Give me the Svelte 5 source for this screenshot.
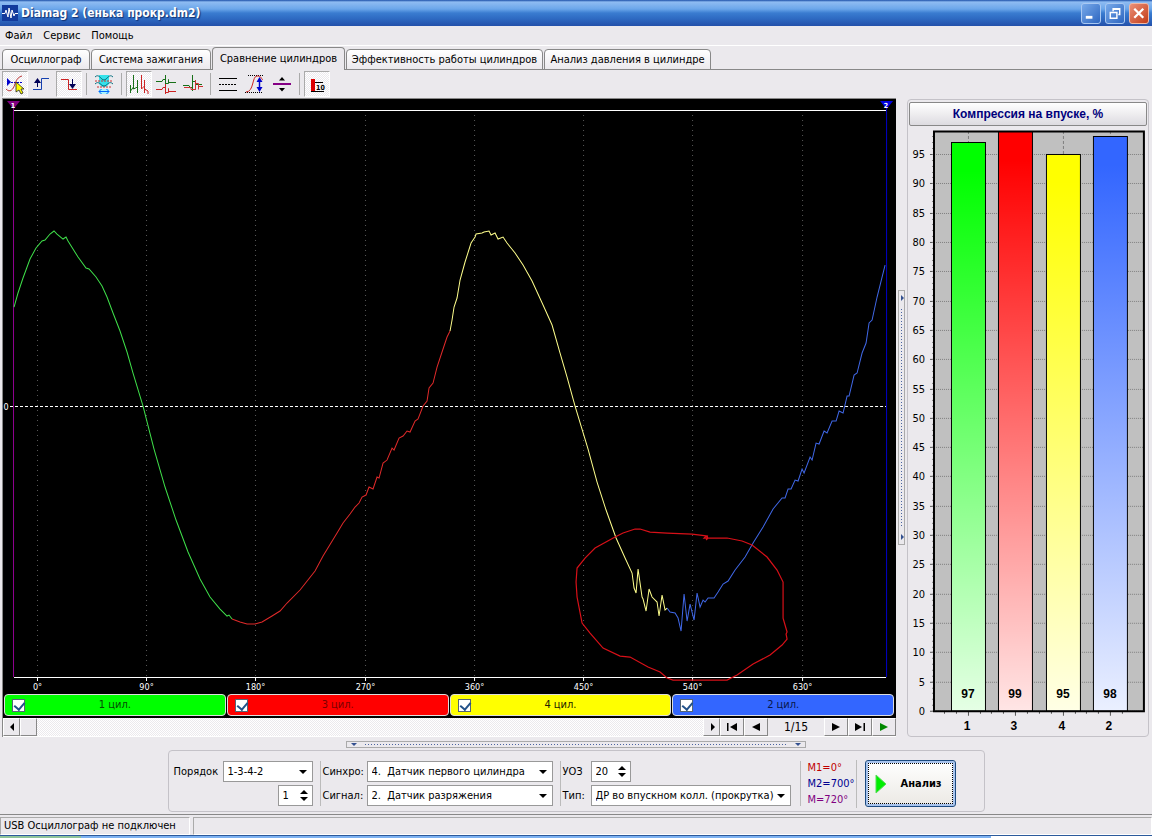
<script lang="ts">
	const tabs = [
		{ label: 'Осциллограф', width: 88 },
		{ label: 'Система зажигания', width: 120 },
		{ label: 'Сравнение цилиндров', width: 133 },
		{ label: 'Эффективность работы цилиндров', width: 197 },
		{ label: 'Анализ давления в цилиндре', width: 167 }
	];
	let activeTab = 2;

	const degrees = [0, 90, 180, 270, 360, 450, 540, 630];
	const degreeX = (deg: number) => Math.round(37 + deg * 1.2135) + 0.5;

	const cylinders = [
		{ id: 1, color: '#00ff00', text: '#064a06', value: 97, shown: true },
		{ id: 3, color: '#ff0000', text: '#7c0000', value: 99, shown: true },
		{ id: 4, color: '#ffff00', text: '#222200', value: 95, shown: true },
		{ id: 2, color: '#3366ff', text: '#08184a', value: 98, shown: true }
	];

	// Sampled pressure curve, one part per cylinder
	const curves = [
		{
			color: '#3fe04a',
			points:
				'14,307 18,293 23,278 30,259 36,248 42,241 45,240 50,234 54,231 57,234 63,239 66,237 68,241 78,257 86,268 89,269 96,277 102,286 107,297 113,313 120,331 127,352 133,373 143,406 154,449 165,487 176,520 188,552 200,579 210,597 220,609 227,616 229,615 232,619'
		},
		{
			color: '#e02a2a',
			points:
				'232,619 240,622 247,624 255,624 262,622 272,616 280,611 287,603 300,590 315,571 323,556 337,533 343,523 350,514 355,507 359,503 362,497 366,495 369,487 373,489 377,477 379,478 383,463 387,460 392,448 394,450 399,438 403,436 407,431 410,432 415,421 418,419 423,406 427,401 429,388 433,383 437,367 442,352 445,343 447,337 450,331'
		},
		{
			color: '#ffff8c',
			points:
				'450,331 452,320 454,307 457,298 460,280 465,262 471,243 475,237 476,234 482,233 484,232 489,231 491,235 495,233 498,239 503,237 507,243 515,253 523,265 532,281 543,305 552,325 560,353 567,377 575,406 588,449 597,482 606,510 616,538 625,558 632,573 634,588 636,593 638,569 642,597 643,599 646,611 649,589 652,597 657,602 659,616 662,595 665,610 667,608'
		},
		{
			color: '#4068e8',
			points:
				'667,608 670,612 675,613 678,618 681,631 684,594 687,621 690,604 694,620 697,593 700,607 703,600 705,602 708,598 714,598 718,592 723,584 728,581 735,570 745,557 753,543 763,527 773,509 782,498 785,498 788,489 791,489 795,480 798,481 802,469 804,473 810,457 812,460 816,443 819,444 824,431 827,433 832,421 836,421 839,411 843,413 847,396 849,396 854,375 857,373 862,353 866,343 869,323 872,320 877,297 885,265'
		}
	];

	const marker =
		'708,536 692,534 667,533 650,532 640,529 635,529 623,533 615,537 595,548 585,558 577,568 576,582 577,597 582,623 590,633 603,648 620,656 630,657 648,667 660,672 667,678 673,680 727,680 737,675 753,664 770,655 782,645 787,639 786,634 787,632 783,618 783,582 777,570 767,557 752,545 742,541 727,538 704,538 706,536 708,538 706,540';

	// Compression chart
	const base = 711;
	const top = 131;
	const unit = 5.863;
	const levels = Array.from({ length: 20 }, (_, i) => i * 5);
	const minor = Array.from({ length: 99 }, (_, i) => i);
	const valueY = (v: number) => Math.round(base - v * unit);
	const barX = (i: number) => Math.round(951 + i * 47.4);
</script>

<div class="app">
	<header class="titlebar">
		<svg class="logo" width="16" height="16" viewBox="0 0 16 16">
			<rect width="16" height="16" fill="#123a9c" />
			<path d="M0 8.500H3L4 5L6 12L7 3L9 13L10 5L12 11L13 8.500H16" fill="none" stroke="#fff" />
		</svg>
		<h1>Diamag 2 (енька прокр.dm2)</h1>
		<div class="window-buttons">
			<button aria-label="Свернуть"><svg viewBox="0 0 19 19"><path d="M4 13.500H11" stroke="#fff" stroke-width="3" /></svg></button>
			<button aria-label="Восстановить"><svg viewBox="0 0 19 19"><path d="M4.500 8.500H11.500V14.500H4.500ZM4 8.500H12M7.500 7V4.500H14.500V10.500H13M7 5H15" fill="none" stroke="#fff" stroke-width="1.500" /></svg></button>
			<button class="close" aria-label="Закрыть"><svg viewBox="0 0 19 19"><path d="M4.500 4.500L14 14M14 4.500L4.500 14" stroke="#fff" stroke-width="2.400" /></svg></button>
		</div>
	</header>

	<nav class="menu">
		<button>Файл</button>
		<button>Сервис</button>
		<button>Помощь</button>
	</nav>

	<div class="tabs" role="tablist">
		{#each tabs as tab, i}
			<button
				role="tab"
				class="tab"
				class:active={i === activeTab}
				aria-selected={i === activeTab}
				style="flex-basis: {tab.width}px"
				on:click={() => (activeTab = i)}>{tab.label}</button>
		{/each}
	</div>

	<div class="toolbar">
		<button class="tool pressed" aria-label="Выбор">
			<svg viewBox="0 0 26 26">
				<path d="M5 7L9 11L5 15Z" fill="#00c" />
				<path d="M9 11.500H20" stroke="#00c" stroke-dasharray="2 1" />
				<path d="M4 18C8 22 11 19 13 13S17 6 20 5" fill="none" stroke="#b33" />
				<path d="M14 11L14 21L17 19L19 23L21 22L19 18H22Z" fill="#ff0" stroke="#222" stroke-width=".8" />
			</svg>
		</button>
		<button class="tool" aria-label="Передний фронт">
			<svg viewBox="0 0 26 26">
				<path d="M4 18.500H12.500V7.500H20" fill="none" stroke="#1540b0" />
				<path d="M8.500 16V9" stroke="#005" />
				<path d="M5 12L8.500 7L12 12Z" fill="#005" />
			</svg>
		</button>
		<button class="tool pressed" aria-label="Задний фронт">
			<svg viewBox="0 0 26 26">
				<path d="M5 8.500H12.500V18.500H21" fill="none" stroke="#c22" />
				<path d="M16.500 8V16" stroke="#005" />
				<path d="M13 13L16.500 18L20 13Z" fill="#005" />
			</svg>
		</button>
		<i class="sep"></i>
		<button class="tool" aria-label="Ширина">
			<svg viewBox="0 0 26 26">
				<path d="M8 4H18V13L15 16H11L8 13Z" fill="#35e2ea" />
				<path d="M8 18H18V23H8Z" fill="#a8f4fa" />
				<path d="M4 6C8 2 10 9 13 9S18 2 22 6M4 13C8 9 10 15 13 15S18 9 22 13" fill="none" stroke="#087080" />
				<path d="M4 10H22M6 16H20" stroke="#c33" stroke-dasharray="2 1" />
				<path d="M8 20.500H18M10.500 18L8 20.500L10.500 23M15.500 18L18 20.500L15.500 23" fill="none" stroke="#06f" />
			</svg>
		</button>
		<i class="sep"></i>
		<button class="tool pressed" aria-label="Последовательно">
			<svg viewBox="0 0 26 26">
				<path d="M4.500 22V14M4.500 20L7.500 16V4V18L11.500 16V9M11.500 22V14" fill="none" stroke="#187018" />
				<path d="M15.500 4V18L18.500 15V22M18.500 9V18L22 20V23" fill="none" stroke="#c22" />
			</svg>
		</button>
		<button class="tool" aria-label="Одна под другой">
			<svg viewBox="0 0 26 26">
				<path d="M3 10.500H9L10 8.500H12.500V4V13.500M12.500 12.500H15.500V8.500V11.500H23" fill="none" stroke="#187018" />
				<path d="M3 18.500H9L10 16.500H12.500V13V23M12.500 21.500H15.500V17.500V20.500H23" fill="none" stroke="#c22" />
			</svg>
		</button>
		<button class="tool" aria-label="Наложение">
			<svg viewBox="0 0 26 26">
				<path d="M3 14.500H9L10 16.500H12.500V4V20M12.500 10.500H15.500V13.500H22" fill="none" stroke="#187018" />
				<path d="M4 16.500H11V18.500H15.500V9V19M15.500 12.500H18.500V18.500M18.500 15.500H23" fill="none" stroke="#c33" />
			</svg>
		</button>
		<i class="sep"></i>
		<button class="tool" aria-label="Линии">
			<svg viewBox="0 0 26 26">
				<path d="M4 7.500H22M4 19.500H22" stroke="#000" />
				<path d="M4 13.500H22" stroke="#000" stroke-dasharray="2 1" />
			</svg>
		</button>
		<button class="tool" aria-label="Амплитуда">
			<svg viewBox="0 0 26 26">
				<path d="M6 4.500H22M3 21.500H20" stroke="#000" stroke-dasharray="1 1" />
				<path d="M4 21C12 21 10 5 15 5S19 8 21 9" fill="none" stroke="#c22" />
				<path d="M17.500 9V18" stroke="#00c" stroke-width="1.500" />
				<path d="M14.500 11L17.500 6L20.500 11ZM14.500 16L17.500 21L20.500 16Z" fill="#00c" />
			</svg>
		</button>
		<button class="tool" aria-label="Сдвиг">
			<svg viewBox="0 0 26 26">
				<path d="M4 13H22" stroke="#850085" stroke-width="2" />
				<path d="M10 9.500L13 6L16 9.500ZM10 17L13 20.500L16 17Z" fill="#000" />
			</svg>
		</button>
		<i class="sep"></i>
		<button class="tool pressed" aria-label="Диаграмма">
			<svg viewBox="0 0 26 26">
				<rect x="7" y="8" width="4" height="12" fill="#d00" />
				<path d="M7 20.500H20M11 11.500H19" stroke="#000" />
				<text x="12" y="19" font-size="7" font-weight="bold">10</text>
			</svg>
		</button>
	</div>

	<main>
		<section class="scope">
			<svg class="wave" viewBox="3 99 893 594">
				<rect x="3" y="99" width="893" height="594" fill="#000" />
				{#each degrees as deg}
					<line x1={degreeX(deg)} y1="115" x2={degreeX(deg)} y2="677" stroke="#585858" stroke-dasharray="1 4" />
					<line x1={degreeX(deg)} y1="678" x2={degreeX(deg)} y2="681" stroke="#fff" />
					<text class="axis" x={degreeX(deg)} y="690">{deg}°</text>
				{/each}
				<line x1="14" y1="110.500" x2="886" y2="110.500" stroke="#fff" />
				<line x1="14" y1="677.500" x2="886" y2="677.500" stroke="#fff" />
				<line x1="10" y1="406.500" x2="886" y2="406.500" stroke="#fff" stroke-dasharray="3 2" />
				<text class="axis" x="6" y="410">0</text>
				<line x1="13.500" y1="102" x2="13.500" y2="677" stroke="#900090" />
				<line x1="886.500" y1="102" x2="886.500" y2="677" stroke="#0000c8" />
				<path d="M7 101H20L13.500 109Z" fill="#800080" />
				<path d="M880 101H893L886.500 109Z" fill="#0000e0" />
				<text class="flag" x="13" y="108">1</text>
				<text class="flag" x="886" y="108">2</text>
				{#each curves as curve}
					<polyline points={curve.points} fill="none" stroke={curve.color} />
				{/each}
				<polyline points={marker} fill="none" stroke="#d81018" stroke-width="1.200" />
			</svg>

			<div class="cylinders">
				{#each cylinders as cyl}
					<label class="cylinder" style="background: {cyl.color}; color: {cyl.text}">
						<input type="checkbox" bind:checked={cyl.shown} />
						<span>{cyl.id} цил.</span>
					</label>
				{/each}
			</div>

			<div class="scroll">
				<button class="step" aria-label="Влево"><svg viewBox="0 0 12 12"><path d="M8 2V10L4 6Z" /></svg></button>
				<div class="track"><button class="step" aria-label="Ползунок"></button></div>
				<button class="step" aria-label="Вправо"><svg viewBox="0 0 12 12"><path d="M5 2V10L9 6Z" /></svg></button>
				<button class="nav" aria-label="Первый"><svg viewBox="0 0 12 12"><path d="M1 2H2.500V10H1ZM11 2V10L4 6Z" /></svg></button>
				<button class="nav" aria-label="Назад"><svg viewBox="0 0 12 12"><path d="M10 2V10L2 6Z" /></svg></button>
				<output>1/15</output>
				<button class="nav" aria-label="Вперёд"><svg viewBox="0 0 12 12"><path d="M2 2V10L10 6Z" /></svg></button>
				<button class="nav" aria-label="Последний"><svg viewBox="0 0 12 12"><path d="M1 2V10L8 6ZM9.500 2H11V10H9.500Z" /></svg></button>
				<button class="nav play" aria-label="Пуск"><svg viewBox="0 0 12 12"><path d="M2 2V10L10 6Z" /></svg></button>
			</div>
		</section>

		<div class="splitter vertical"><div class="grip"><b></b><i></i><b></b></div></div>

		<section class="compression">
			<button class="heading">Компрессия на впуске, %</button>
			<svg class="bars" viewBox="909 127 238 609">
				<defs>
					{#each cylinders as cyl}
						<linearGradient id="fill-{cyl.id}" x1="0" y1="0" x2="0" y2="1">
							<stop offset="0" stop-color={cyl.color} />
							<stop offset=".05" stop-color={cyl.color} />
							<stop offset="1" stop-color={cyl.color} stop-opacity=".1" />
						</linearGradient>
					{/each}
				</defs>
				<rect x="934" y={top} width="210" height={base - top} fill="#c0c0c0" />
				{#each levels as v}
					<line x1="934" y1={valueY(v) + 0.5} x2="1144" y2={valueY(v) + 0.5} stroke="#808080" stroke-dasharray="1 1" />
					<line x1="930" y1={valueY(v) + 0.5} x2="934" y2={valueY(v) + 0.5} stroke="#555" />
					<text class="level" x="925" y={valueY(v) + 4}>{v}</text>
				{/each}
				{#each minor as v}
					<line x1="932" y1={valueY(v) + 0.5} x2="934" y2={valueY(v) + 0.5} stroke="#888" />
				{/each}
				{#each cylinders as cyl, i}
					{@const y = Math.max(valueY(cyl.value), top)}
					<line x1={barX(i) + 17.5} y1={top} x2={barX(i) + 17.5} y2={base} stroke="#808080" stroke-dasharray="3 2" />
					<rect x={barX(i)} {y} width="35" height={base - y} fill="#fff" />
					<rect x={barX(i) + 0.5} y={y + 0.5} width="34" height={base - y} fill="url(#fill-{cyl.id})" stroke="#000" />
					<text class="value" x={barX(i) + 17} y="698">{cyl.value}</text>
					<text class="value" x={barX(i) + 16} y="730">{cyl.id}</text>
					{#each [-24, -12, 0, 12] as dx}
						<line x1={barX(i) + 17.5 + dx} y1="712" x2={barX(i) + 17.5 + dx} y2={dx ? 714 : 716} stroke="#555" />
					{/each}
				{/each}
				<path d="M934 711V131.500H1144V711" fill="none" stroke="#000" stroke-width="2" />
				<path d="M933 711.500H1145" stroke="#000" stroke-width="2" />
			</svg>
		</section>
	</main>

	<div class="splitter horizontal"><div class="grip"><b></b><i></i><b></b></div></div>

	<form class="settings" on:submit|preventDefault>
		<div class="box">
			<div class="fields order">
				<label for="order">Порядок</label>
				<div class="select"><select id="order"><option>1-3-4-2</option></select></div>
				<div class="spin first">
					<input aria-label="Номер цилиндра" value="1" />
					<span><button type="button" aria-label="Больше"></button><button type="button" class="down" aria-label="Меньше"></button></span>
				</div>
			</div>
			<div class="fields sensors">
				<label for="sync">Синхро:</label>
				<div class="select"><select id="sync"><option>4.&nbsp; Датчик первого цилиндра</option></select></div>
				<label for="signal">Сигнал:</label>
				<div class="select"><select id="signal"><option>2.&nbsp; Датчик разряжения</option></select></div>
			</div>
			<div class="fields kind">
				<label for="angle">УОЗ</label>
				<div class="spin">
					<input id="angle" value="20" />
					<span><button type="button" aria-label="Больше"></button><button type="button" class="down" aria-label="Меньше"></button></span>
				</div>
				<label for="type">Тип:</label>
				<div class="select"><select id="type"><option>ДР во впускном колл. (прокрутка)</option></select></div>
			</div>
			<div class="marks">
				<span class="m1">M1=0°</span>
				<span class="m2">M2=700°</span>
				<span class="m">M=720°</span>
			</div>
			<button class="analyze">
				<svg width="12" height="20" viewBox="0 0 12 20"><path d="M1 1L11 10L1 19Z" fill="#0e0" stroke="#5d5" /></svg>
				Анализ
			</button>
		</div>
	</form>

	<footer>
		<span class="status">USB Осциллограф не подключен</span>
		<span class="rest"></span>
	</footer>
	<div class="taskbar"></div>
</div>

<style>
	:global(body) {
		margin: 0;
		background: #ebe9ed;
	}

	* {
		box-sizing: border-box;
	}

	.app {
		display: flex;
		flex-direction: column;
		font-family: 'DejaVu Sans Condensed', 'DejaVu Sans', sans-serif;
		font-size: 11px;
		line-height: 14px;
		color: #000;
		background: #ebe9ed;
	}

	button,
	input,
	select {
		font: inherit;
		color: inherit;
		margin: 0;
		padding: 0;
	}

	button {
		border: 0;
		background: none;
		white-space: nowrap;
	}

	/* Title bar */
	.titlebar {
		display: flex;
		align-items: center;
		height: 26px;
		padding: 0 3px 0 2px;
		background: linear-gradient(#1c4fa8 0, #8fbcf2 2px, #6ba6ea 9px, #3a7cd0 13px, #2f6cc4 18px, #2350aa 26px);
	}

	h1 {
		flex: 1;
		margin: 0 0 0 3px;
		font-size: 12px;
		line-height: 16px;
		font-weight: bold;
		color: #fff;
		text-shadow: 1px 1px 1px #123070;
	}

	.window-buttons {
		display: flex;
		gap: 4px;
	}

	.window-buttons button {
		width: 20px;
		height: 21px;
		border: 1px solid #a9c8f2;
		border-radius: 3px;
		background: linear-gradient(135deg, #77a9ea, #2d66c0);
	}

	.window-buttons .close {
		border-color: #f0b8a4;
		background: linear-gradient(135deg, #eb9078, #c23c18);
	}

	.window-buttons svg {
		display: block;
		width: 18px;
		height: 19px;
	}

	/* Menu and tabs */
	.menu {
		display: flex;
		gap: 11px;
		height: 20px;
		padding: 1px 5px 0;
		border-bottom: 1px solid #fff;
	}

	.tabs {
		display: flex;
		align-items: flex-end;
		gap: 1px;
		height: 24px;
		padding-left: 2px;
		box-shadow: inset 0 -1px #888;
	}

	.tab {
		flex: 0 0 auto;
		height: 21px;
		border: 1px solid #888;
		border-radius: 4px 4px 0 0;
		background: linear-gradient(#fff, #ebe9ed);
	}

	.tab.active {
		height: 23px;
		padding-bottom: 1px;
		border-bottom: 0;
		background: #ebe9ed;
	}

	/* Toolbar */
	.toolbar {
		display: flex;
		align-items: center;
		gap: 1px;
		height: 28px;
		padding-left: 2px;
	}

	.tool {
		width: 26px;
		height: 26px;
	}

	.tool svg {
		display: block;
		width: 26px;
		height: 26px;
		margin: -1px;
	}

	.tool:not(.pressed) svg {
		margin: 0;
	}

	.pressed {
		border: 1px solid #fff;
		border-top-color: #aaa;
		border-left-color: #aaa;
		background: repeating-conic-gradient(#fff 0 25%, #ebe9ed 0 50%) 0 0 / 2px 2px;
	}

	.sep {
		width: 1px;
		height: 22px;
		margin: 0 3px;
		background: #aaa;
	}

	/* Oscilloscope */
	main {
		display: flex;
	}

	.scope {
		flex: 1;
		min-width: 0;
		margin-left: 2px;
		border-top: 1px solid #888;
		border-left: 1px solid #888;
	}

	.wave,
	.bars {
		display: block;
		width: 100%;
	}

	.axis {
		fill: #fff;
		font-size: 9px;
		text-anchor: middle;
	}

	.flag {
		fill: #fff;
		font-size: 7px;
		font-weight: bold;
		text-anchor: middle;
	}

	.cylinders {
		display: flex;
		gap: 1px;
		padding: 1px 2px 2px 1px;
		background: #000;
	}

	.cylinder {
		display: grid;
		grid-template-columns: 1fr auto 1fr;
		align-items: center;
		flex: 1;
		height: 22px;
		padding: 0 7px;
		border: 1px solid #ddd;
		border-radius: 4px;
	}

	.cylinder input {
		appearance: none;
		width: 13px;
		height: 13px;
		border: 1px solid #567;
		background: #fff;
	}

	.cylinder input:checked::after {
		content: '';
		display: block;
		width: 5px;
		height: 8px;
		margin: 0 0 0 3px;
		border: solid #23528a;
		border-width: 0 2px 2px 0;
		transform: rotate(40deg);
	}

	.scroll {
		display: flex;
		height: 19px;
		border-bottom: 1px solid #fff;
	}

	.step,
	.nav {
		display: flex;
		align-items: center;
		justify-content: center;
		width: 17px;
		border: 1px solid #fff;
		border-right-color: #888;
		border-bottom-color: #888;
		background: #ebe9ed;
	}

	.nav {
		width: 24px;
	}

	.step svg,
	.nav svg {
		flex: none;
		width: 12px;
		height: 12px;
	}

	.play {
		fill: #080;
	}

	.track {
		display: flex;
		flex: 1;
		background: repeating-conic-gradient(#fff 0 25%, #ebe9ed 0 50%) 0 0 / 2px 2px;
	}

	output {
		width: 56px;
		font-size: 12px;
		line-height: 18px;
		text-align: center;
	}

	/* Splitters */
	.splitter {
		display: flex;
		align-items: center;
		justify-content: center;
	}

	.vertical {
		width: 11px;
	}

	.horizontal {
		height: 13px;
		padding-top: 2px;
	}

	.grip {
		display: flex;
		align-items: center;
		border: 1px solid #aaa;
	}

	.vertical .grip {
		flex-direction: column;
		width: 7px;
		height: 40%;
	}

	.horizontal .grip {
		width: 40%;
		height: 7px;
	}

	.grip i {
		flex: 1;
	}

	.vertical i {
		width: 1px;
		margin: 4px 0;
		background: repeating-linear-gradient(#4a64a0 0 1px, transparent 1px 3px);
	}

	.horizontal i {
		height: 1px;
		margin: 0 4px;
		background: repeating-linear-gradient(90deg, #4a64a0 0 1px, transparent 1px 3px);
	}

	.grip b {
		width: 0;
		height: 0;
		border: 3px solid transparent;
	}

	.vertical b {
		margin: 4px -2px 4px 2px;
		border-left-color: #33508f;
	}

	.horizontal b {
		margin: 3px 4px 0;
		border-top-color: #33508f;
	}

	/* Compression chart */
	.compression {
		flex: 0 0 21%;
		min-width: 0;
		margin: 1px 3px 0 0;
		padding: 2px 1px 0;
		border: 1px solid #c4c2c8;
		border-radius: 4px;
	}

	.heading {
		display: block;
		width: 100%;
		height: 24px;
		margin-bottom: 1px;
		border: 1px solid #888;
		border-radius: 2px;
		font-family: 'Liberation Sans', Arial, sans-serif;
		font-size: 12px;
		font-weight: bold;
		color: #00007c;
		background: linear-gradient(#fff, #dddbe0);
	}

	.level {
		font-size: 11px;
		text-anchor: end;
	}

	.value {
		font-family: 'Liberation Sans', Arial, sans-serif;
		font-size: 12px;
		font-weight: bold;
		text-anchor: middle;
	}

	/* Settings */
	.settings {
		display: flex;
		justify-content: center;
		padding-bottom: 2px;
		border-bottom: 1px solid #888;
	}

	.box {
		display: flex;
		align-items: center;
		height: 62px;
		padding: 5px 28px 0 5px;
		border: 1px solid #c4c2c8;
		border-radius: 4px;
	}

	.fields {
		display: grid;
		grid-auto-rows: 21px;
		row-gap: 3px;
		align-items: center;
		padding-right: 7px;
		margin-right: 2px;
		border-right: 1px solid #bbb;
	}

	.order {
		grid-template-columns: 49px 90px;
	}

	.sensors {
		grid-template-columns: 44px 186px;
	}

	.kind {
		grid-template-columns: 28px 200px;
		padding-right: 9px;
		margin-right: 7px;
	}

	.select {
		position: relative;
	}

	.select::after {
		content: '';
		position: absolute;
		top: 9px;
		right: 6px;
		border: 4px solid transparent;
		border-top-color: #000;
		pointer-events: none;
	}

	select {
		appearance: none;
		display: block;
		width: 100%;
		height: 21px;
		padding: 0 15px 0 4px;
		border: 1px solid #999;
		border-radius: 0;
		background: #fff;
	}

	.spin {
		display: flex;
		align-items: center;
		justify-self: start;
		width: 40px;
		height: 21px;
		padding: 0 4px;
		border: 1px solid #999;
		background: #fff;
	}

	.first {
		grid-column: 2;
		justify-self: end;
		width: 35px;
	}

	.spin input {
		width: 100%;
		min-width: 0;
		border: 0;
		outline: 0;
		background: none;
	}

	.spin span {
		display: flex;
		flex-direction: column;
		gap: 3px;
	}

	.spin button {
		border: 4px solid transparent;
		border-top-width: 0;
		border-bottom-color: #000;
	}

	.spin .down {
		border-width: 4px 4px 0;
		border-top-color: #000;
	}

	.marks {
		display: flex;
		flex-direction: column;
		width: 49px;
		margin-right: 8px;
		border-right: 1px solid #bbb;
		line-height: 16px;
	}

	.m1 {
		color: #c00000;
	}

	.m2 {
		color: #000090;
	}

	.m {
		color: #800080;
	}

	.analyze {
		display: flex;
		align-items: center;
		gap: 14px;
		width: 91px;
		height: 47px;
		padding-left: 9px;
		border: 1px solid #1c4a80;
		border-radius: 3px;
		box-shadow: inset 0 0 0 2px #a8c4ee;
		outline: 1px dotted #000;
		outline-offset: -4px;
		font-weight: bold;
		background: linear-gradient(#fff, #ebe9e4);
	}

	/* Status bar */
	footer {
		display: flex;
		gap: 3px;
		height: 20px;
		padding-top: 2px;
		line-height: 15px;
	}

	footer span {
		border: 1px solid #aaa;
		border-right-color: #fff;
		border-bottom-color: #fff;
	}

	.status {
		width: 190px;
		padding-left: 3px;
	}

	.rest {
		flex: 1;
	}

	.taskbar {
		height: 3px;
		border-top: 1px solid #2c5a9c;
		background: linear-gradient(90deg, #8fc49a 7%, #7db2f2 7% 86%, #fff 86%);
	}
</style>
